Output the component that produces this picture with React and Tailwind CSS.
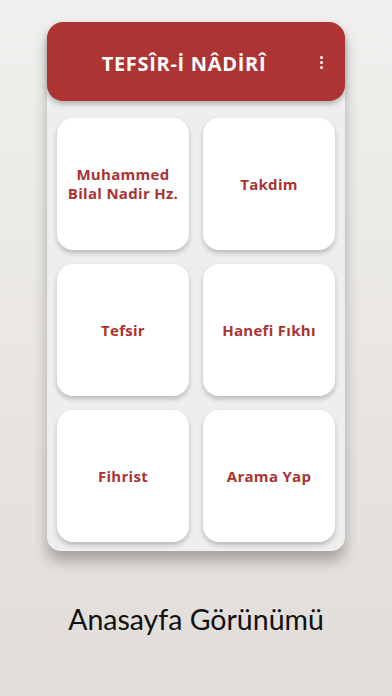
import React from 'react';

const items = [
  ['Muhammed', 'Bilal Nadir Hz.'],
  ['Takdim'],
  ['Tefsir'],
  ['Hanefi Fıkhı'],
  ['Fihrist'],
  ['Arama Yap'],
];

const MenuCard = ({ lines }) => (
  <div className="w-[132px] h-[132px] bg-white rounded-[16px] shadow-[0_3px_5px_rgba(0,0,0,0.22)] flex flex-col items-center justify-center text-center">
    {lines.map(l => (
      <span key={l} className="text-[15px] leading-[19px] font-bold tracking-[0.3px] text-[#a93433] font-['Open_Sans',sans-serif]">{l}</span>
    ))}
  </div>
);

export default function App() {
  return (
    <div className="w-[392px] h-[696px] bg-gradient-to-b from-[#f1f0ee] to-[#e1ddd8] flex flex-col items-center pt-[22px] overflow-hidden">
      <div className="w-[298px] bg-[#eeeeee] rounded-[14px] shadow-[0_10px_14px_rgba(0,0,0,0.28)]">
        <div className="relative h-[79px] bg-[#ad3432] rounded-[16px] shadow-[0_3px_5px_rgba(0,0,0,0.25)] flex items-center justify-center pr-[24px] pt-[4px]">
          <h1 className="text-white font-bold text-[20px] tracking-[0.7px] font-['Open_Sans',sans-serif]">TEFSÎR-İ NÂDİRÎ</h1>
          <div className="absolute right-[22px] top-[34px] flex flex-col gap-[2px]">
            <span className="w-[3px] h-[3px] rounded-full bg-white" />
            <span className="w-[3px] h-[3px] rounded-full bg-white" />
            <span className="w-[3px] h-[3px] rounded-full bg-white" />
          </div>
        </div>
        <div className="grid grid-cols-2 gap-[14px] px-[10px] pt-[17px] pb-[9px]">
          {items.map((lines, i) => <MenuCard key={i} lines={lines} />)}
        </div>
      </div>
      <div className="mt-[47px] text-[28.5px] text-[#111111] font-['Lato',sans-serif]">Anasayfa Görünümü</div>
    </div>
  );
}
